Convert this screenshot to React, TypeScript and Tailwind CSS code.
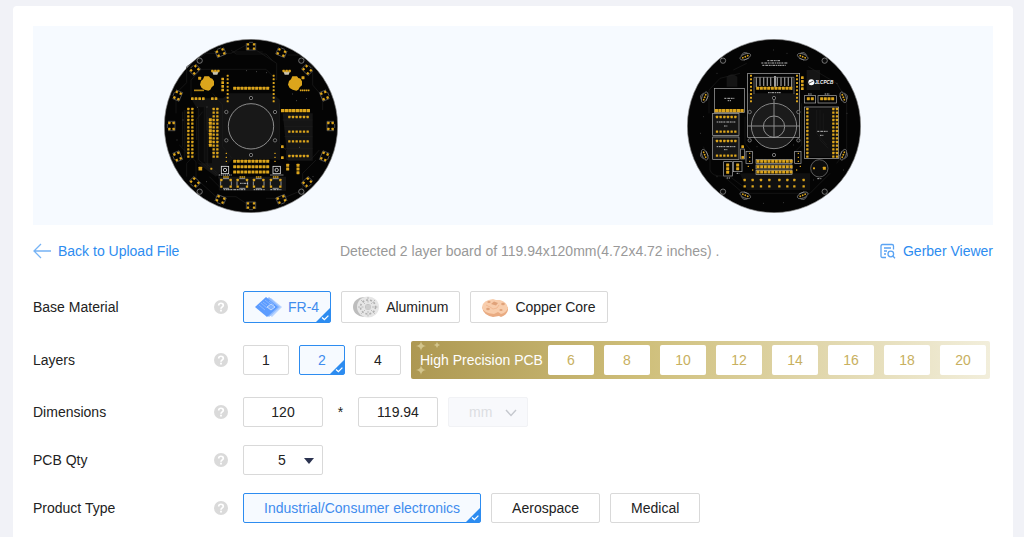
import { useState, type ReactNode } from 'react';

const GOLD = '#dca51c';
const SILK = '#b0b0b0';

type PadsProps = { x: number; y: number; nx?: number; ny?: number; dx?: number; dy?: number; s?: number };

/** A grid of square pads; x and y are the centre of the first one. */
function Pads({ x, y, nx = 1, ny = 1, dx = 11, dy = 11, s = 7 }: PadsProps) {
  const cells: ReactNode[] = [];
  for (let j = 0; j < ny; j++) {
    for (let i = 0; i < nx; i++) {
      cells.push(<rect key={`${i}-${j}`} x={x + i * dx - s / 2} y={y + j * dy - s / 2} width={s} height={s} rx={1} />);
    }
  }
  return <g fill={GOLD}>{cells}</g>;
}

function Hole({ x, y, r }: { x: number; y: number; r: number }) {
  return <circle cx={x} cy={y} r={r} fill="#0b0b0b" stroke="#858585" strokeWidth={2.5} />;
}

function Box({ x, y, w, h }: { x: number; y: number; w: number; h: number }) {
  return <rect x={x} y={y} width={w} height={h} fill="none" stroke={SILK} strokeWidth={2} />;
}

function Marks({ d }: { d: string }) {
  return <path d={d} fill="none" stroke="#d8d8d8" strokeWidth={2.5} strokeDasharray="5 2 3 1 7 2" />;
}

const RING_16 = Array.from({ length: 16 }, (_, i) => i * 22.5);
const RING_8 = Array.from({ length: 8 }, (_, i) => i * 45 + 22.5);
const KEYS = [210, 259, 308, 359];

function Traces() {
  return (
    <g fill="none" stroke="#1d1d1d" strokeWidth={2}>
      <path d="M60 250 V190 L92 158 V110 L150 70 H225 L270 45 M105 200 V150 L135 118 H330 L362 150 V100 L300 60" />
      <path d="M70 345 L120 395 V445 L180 500 H240 L285 530 M128 235 V390 L190 440 V480 H380" />
      <path d="M500 240 V200 L470 165 V110 L430 75 H395 M480 390 L440 430 V480 L380 505 H330" />
      <path d="M150 230 V400 L185 430 M145 230 V395 M140 245 L122 268 V330 M155 260 V410" />
      <path d="M370 220 V340 L392 362 V388 H465 L490 360 M380 270 H470 M385 290 H470 M385 320 H470 M375 355 H470" />
      <path d="M120 370 L92 400 V440 M160 440 L200 480 M90 240 V380 M85 240 V385 M80 245 V350" />
      <path d="M225 60 L240 72 H330 L350 92 M230 66 H320 M170 190 L200 225 V350 M200 350 L228 385" />
    </g>
  );
}

function BoardFront() {
  return (
    <svg viewBox="24 27 522 522" className="size-[174px]" role="img" aria-label="Top side of the board">
      <circle cx={285} cy={288} r={260} fill="#040404" stroke="#8d8d8d" strokeWidth={2} />
      <path d="M105 205 H200 L222 190 H350 L372 210 V390 L340 388 H230 L180 440 L125 400 V240 Z" fill="#131313" />
      <path d="M185 440 H390 V482 H205 Z M380 250 H470 V392 H395 Z" fill="#151515" />
      <path d="M120 232 L150 232 V300 L168 320 V400 H122 Z" fill="#080808" />
      <Traces />
      {RING_16.map((a) => (
        <g key={a} transform={`rotate(${a} 285 288) translate(285 49)`}>
          <path d="M-14 -10 V11 H14 V-10 M-6 -12 H6" fill="none" stroke="#8a8a8a" strokeWidth={1.5} />
          <Pads x={-9} y={-6} nx={2} ny={2} dx={18} dy={13} s={7} />
        </g>
      ))}
      <circle cx={285} cy={289} r={68} fill="#181818" stroke="#a5a5a5" strokeWidth={2.5} />
      {[[131, 92], [436, 92], [131, 485], [436, 485]].map(([x, y]) => <Hole key={`${x}${y}`} x={x} y={y} r={8} />)}
      {[[285, 204], [211, 246], [357, 246], [211, 331], [357, 331], [285, 375]].map(([x, y]) => (
        <Hole key={`${x}${y}`} x={x} y={y} r={5} />
      ))}
      {[153, 417].map((x) => (
        <path key={x} transform={`translate(${x} 160)`} fill={GOLD}
          d="M-8 -21 H6 L10 -16 L16 -14 L21 -6 V6 L14 12 L10 19 L4 22 L-7 19 L-16 14 L-21 4 L-18 -7 L-12 -12 Z" />
      ))}
      {[178, 392].map((x) => (
        <g key={x}>
          <path d={`M${x - 10} 124 H${x + 10} L${x + 6} 134 H${x - 6} Z`} fill="#c9c3b1" />
          <Pads x={x - 9} y={123} nx={3} dx={9} s={7} />
        </g>
      ))}
      <Pads x={131} y={145} s={9} /><Pads x={441} y={143} s={9} /><Pads x={430} y={150} s={7} />
      <Pads x={215} y={137} ny={8} s={6} />
      <Pads x={353} y={137} ny={8} s={6} />
      <Pads x={200} y={147} ny={4} s={8} />
      <Pads x={236} y={175} nx={10} s={9} />
      <Pads x={117} y={181} nx={5} dx={6} s={5} />
      <Pads x={434} y={181} nx={5} dx={6} s={5} />
      <Pads x={109} y={206} nx={4} s={8} />
      <Pads x={169} y={206} nx={2} s={8} />
      <Pads x={97} y={237} nx={2} dx={12} ny={14} s={7} />
      <Pads x={173} y={237} nx={2} ny={14} s={7} />
      <Pads x={163} y={269} ny={8} s={9} />
      <Pads x={380} y={242} nx={8} s={10} />
      {[261, 305, 334, 378].map((y) => <Pads key={y} x={400} y={y} nx={6} s={7} />)}
      <Pads x={379} y={350} ny={2} dy={33} s={8} />
      <Pads x={395} y={406} ny={2} s={9} />
      <Pads x={426} y={406} ny={3} s={9} />
      <Pads x={236} y={394} nx={10} ny={3} dy={16} s={9} />
      <Pads x={133} y={416} s={11} /><Pads x={166} y={416} s={6} />
      <Pads x={211} y={370} ny={3} dy={12} s={4} /><Pads x={357} y={370} ny={3} dy={12} s={4} />
      {[207, 362].map((x) => (
        <g key={x} fill="none" stroke="#dedede" strokeWidth={2.5}>
          <rect x={x - 11} y={409} width={22} height={22} />
          <circle cx={x} cy={420} r={5} />
          <path d={`M${x - 19} 435 H${x + 20}`} strokeDasharray="4 2" />
        </g>
      ))}
      {KEYS.map((x) => (
        <g key={x}>
          <path d={`M${x - 9} 446 H${x + 9} M${x - 9} 475 H${x + 9} M${x - 16} 454 V467 M${x + 16} 454 V467`} stroke={SILK} strokeWidth={2.5} />
          <Pads x={x - 14} y={450} nx={2} ny={2} dx={28} dy={20} s={7} />
          <Pads x={x - 6} y={441} nx={3} dx={6} s={5} />
        </g>
      ))}
      <Marks d="M203 479 H270 M293 479 H326 M343 479 H376 M252 460 H276" />
      <path d="M140 210 h2 M123 232 h2 M152 231 h2 M270 122 h2 M300 125 h2 M330 128 h2 M420 212 h2 M450 206 h2 M80 270 h2 M62 330 h2 M430 352 h2 M470 440 h2 M150 455 h2 M408 192 h2" stroke="#999" strokeWidth={2} />
    </svg>
  );
}

function BoardBack() {
  return (
    <svg viewBox="21 27 522 522" className="size-[174px]" role="img" aria-label="Bottom side of the board">
      <circle cx={282} cy={288} r={260} fill="#040404" stroke="#8d8d8d" strokeWidth={2} />
      <path d="M380 120 H420 V180 H380 Z M140 140 Q155 125 172 140 V170 H140 Z M98 250 H177 V388 H98 Z M205 190 H358 V322 H205 Z" fill="#151515" />
      <path d="M180 430 H390 V480 H200 Z M380 235 H470 V380 H380 Z" fill="#101010" />
      <g fill="none" stroke="#1d1d1d" strokeWidth={2}>
        <path d="M87 250 V180 L120 145 L180 130 M90 420 V390 L70 350 M90 420 Q95 440 130 438 L190 490 H390 L450 430" />
        <path d="M385 110 L470 160 L500 210 V360 L470 400 M200 100 L160 120 M420 240 V330 L445 355 M410 240 V310 L440 345 M430 250 V300" />
        <path d="M365 220 V345 L340 370 M195 260 V340 L220 370 M150 440 L190 470" />
      </g>
      {RING_8.map((a) => (
        <g key={a} transform={`rotate(${a} 282 288) translate(282 63)`}>
          <ellipse rx={17} ry={8} fill="none" stroke="#8f8f8f" strokeWidth={2} />
          <path d="M-10 -8 L0 -13 L10 -8 M-8 8 H8" fill="none" stroke="#8f8f8f" strokeWidth={2} />
          <Pads x={-8} y={0} nx={3} dx={8} s={5} />
        </g>
      ))}
      {[[129, 92], [434, 92], [129, 485], [434, 485]].map(([x, y]) => <Hole key={`${x}${y}`} x={x} y={y} r={8} />)}
      <Marks d="M262 92 H300 M244 99 H322 M247 106 H318 M264 188 H302 M133 205 H164 M143 212 H153 M110 276 H166 M132 288 H142 M110 350 H166 M132 359 H142 M412 304 H444 M420 316 H430" />
      <circle cx={282} cy={288} r={68} fill="#1b1b1b" stroke="#9a9a9a" strokeWidth={2.5} />
      <circle cx={282} cy={290} r={32} fill="none" stroke="#a5a5a5" strokeWidth={2.5} />
      <path d="M203 288 H359 M282 200 V322" stroke="#8a8a8a" strokeWidth={3} />
      <Box x={203} y={130} w={156} h={192} />
      <path d="M229 142 V172 M240 142 V168 M251 142 V168 M262 142 V168 M272 142 V168 M292 142 V168 M303 142 V168 M314 142 V168 M325 142 V168 M335 142 V180" stroke="#8a8a8a" strokeWidth={4} />
      <path d="M285 138 V170" stroke="#eee" strokeWidth={4} />
      <path d="M222 142 H342 M222 142 V192 M342 142 V192" stroke="#8e8e8e" strokeWidth={2} />
      <Pads x={213} y={137} ny={8} s={6} /><Pads x={351} y={137} ny={8} s={6} />
      <Pads x={367} y={143} ny={4} s={8} /><Pads x={233} y={175} nx={10} s={9} />
      {[[282, 204], [209, 246], [355, 246], [209, 331], [355, 331], [282, 375]].map(([x, y]) => (
        <Hole key={`${x}${y}`} x={x} y={y} r={5} />
      ))}
      <circle cx={394} cy={157} r={9} fill="#fff" />
      <path d="M386 160 L400 153" stroke="#111" strokeWidth={2} />
      <text x={404} y={162} fontSize={14} fontWeight={700} fontStyle="italic" fill="#fff" className="font-['Liberation_Sans',sans-serif]">JLCPCB</text>
      <Box x={103} y={175} w={90} h={72} /><Pads x={109} y={242} nx={8} s={10} />
      <Box x={98} y={250} w={79} h={66} /><Pads x={111} y={261} nx={6} ny={2} dy={44} s={7} />
      <Box x={98} y={321} w={79} h={67} /><Pads x={111} y={333} nx={6} ny={2} dy={44} s={7} />
      <Box x={182} y={357} w={11} h={30} /><Pads x={188} y={350} ny={2} dy={32} s={8} />
      <Box x={198} y={364} w={19} h={36} /><Box x={344} y={364} w={19} h={36} />
      <Pads x={209} y={370} ny={3} dy={12} s={4} /><Pads x={355} y={370} ny={3} dy={12} s={4} />
      {[394, 411, 427].map((y) => <Box key={y} x={228} y={y - 6} w={108} h={12} />)}
      <Pads x={234} y={394} nx={10} ny={3} dy={16} s={9} />
      {[194, 218, 243, 268, 298, 322, 343, 371].map((x) => <Pads key={x} x={x} y={450} ny={2} dy={19} s={7} />)}
      <Pads x={205} y={409} s={4} /><Pads x={218} y={420} s={4} /><Pads x={361} y={409} s={4} /><Pads x={350} y={420} s={4} />
      <Box x={131} y={395} w={26} h={43} /><Pads x={143} y={405} ny={3} s={9} />
      <Box x={160} y={395} w={26} h={30} /><Pads x={173} y={405} ny={2} s={9} />
      <Marks d="M140 444 H150 M170 430 H178 M384 192 H396 M434 192 H448 M412 446 H424" />
      <Box x={373} y={197} w={34} h={22} /><Pads x={385} y={206} nx={2} dx={12} s={9} />
      <Box x={414} y={197} w={55} h={22} /><Pads x={425} y={206} nx={4} s={9} />
      <Box x={373} y={231} w={103} h={154} />
      <Pads x={382} y={237} ny={14} s={7} /><Pads x={460} y={237} nx={2} ny={14} s={7} />
      <circle cx={418} cy={415} r={26} fill="#0c0c0c" stroke="#858585" strokeWidth={2} />
      <Pads x={402} y={415} s={6} /><Pads x={433} y={415} s={9} />
      <path d="M280 60 h2 M320 70 h2 M110 130 h2 M250 520 h2 M310 518 h2 M470 160 h2 M70 260 h2 M60 310 h2 M500 250 h2 M400 450 h2 M110 440 h2 M490 420 h2 M230 350 h2 M340 345 h2" stroke="#777" strokeWidth={2} />
    </svg>
  );
}

function Fr4Icon() {
  return (
    <svg viewBox="0 0 28 24" className="h-6 w-7" aria-hidden="true">
      <path d="M6 13 L17 3 L28 12 L18 22 Z" fill="#b7d4ff" />
      <path d="M4 13 L15 2 L26 12 L15 22 Z" fill="#8fbaff" />
      <path d="M1 12 L12 2 L24 12 L13 22 Z" fill="#5c9cff" />
      <path d="M5 10 L11 15 M7 8 L13 13 M9 7 L13 10 M11 5 L16 9 M15 6 L20 10" stroke="#94bdff" strokeWidth={0.8} fill="none" />
      <path d="M13 12 L17 9 L21 12 L17 15 Z" fill="#7fb1ff" stroke="#d7e7ff" strokeWidth={0.8} />
    </svg>
  );
}

function AluminumIcon() {
  return (
    <svg viewBox="0 0 28 24" className="h-6 w-7" aria-hidden="true">
      <ellipse cx={12} cy={12} rx={11} ry={10} fill="#bdbdbd" />
      <ellipse cx={16} cy={12} rx={11} ry={10.5} fill="#e6e6e6" />
      <g fill="none" stroke="#b0b0b0">
        <ellipse cx={16} cy={12} rx={7.5} ry={7} strokeWidth={1.6} strokeDasharray="2 2" />
        <path d="M16 2 V22 M6 12 H26 M9 5 L23 19 M23 5 L9 19" strokeWidth={0.8} strokeDasharray="2 1.5" />
      </g>
      <rect x={13.5} y={9.5} width={5} height={5} rx={1} fill="#b8b8b8" />
      <path d="M14 11 H18 M14 13 H18" stroke="#eee" strokeWidth={0.8} />
    </svg>
  );
}

function CopperIcon() {
  return (
    <svg viewBox="0 0 28 24" className="h-6 w-7" aria-hidden="true">
      <path d="M1 12 Q2 20 12 22 L18 21 L20 22 Q26 20 27 15 V12 Z" fill="#e9ab82" />
      <path d="M1 12 Q2 5 12 4 L15 5 L19 5 Q26 7 27 13 Q25 18 20 19 L17 17 L13 19 Q2 18 1 12 Z" fill="#f8cdac" />
      <g fill="#e0a27a">
        <ellipse cx={8} cy={7} rx={1.7} ry={1.1} />
        <ellipse cx={22} cy={9} rx={1.8} ry={1.2} />
        <ellipse cx={7} cy={14} rx={1.8} ry={1.2} />
        <ellipse cx={20} cy={15} rx={1.6} ry={1.1} />
        <path d="M10 9 L13 6.5 L17 8 L15 10.5 Z" />
      </g>
      <path d="M5 10 L9 12 L12 14 L16 13 L18 10" stroke="#efb48c" strokeWidth={0.8} fill="none" />
    </svg>
  );
}

function Help({ topic }: { topic: string }) {
  return (
    <button type="button" aria-label={`About ${topic}`} className="mr-[15px] size-3.5 shrink-0">
      <svg viewBox="0 0 14 14" className="size-3.5" aria-hidden="true">
        <circle cx={7} cy={7} r={7} fill="#dadada" />
        <path d="M4.7 5.5 C4.7 2.5 9.3 2.5 9.3 5.4 C9.3 6.9 7 7 7 8.8" fill="none" stroke="#fff" strokeWidth={1.7} />
        <rect x={6.1} y={9.7} width={1.8} height={1.8} fill="#fff" />
      </svg>
    </button>
  );
}

function Row({ label, htmlFor, children }: { label: string; htmlFor?: string; children: ReactNode }) {
  return (
    <div className="flex items-center">
      <div className="flex w-[210px] shrink-0 items-center justify-between">
        {htmlFor ? <label htmlFor={htmlFor}>{label}</label> : <span>{label}</span>}
        <Help topic={label} />
      </div>
      <div className="flex min-w-0 flex-1 items-center gap-2.5" role="group" aria-label={label}>{children}</div>
    </div>
  );
}

function Option({ selected, onSelect, size, children }: { selected: boolean; onSelect: () => void; size: string; children: ReactNode }) {
  return (
    <button
      type="button"
      aria-pressed={selected}
      onClick={onSelect}
      className={`relative flex shrink-0 items-center justify-center gap-1.5 rounded-xs border ${size} ${
        selected ? 'border-[#2d8cf0] bg-[#f6faff] text-[#3f8cee]' : 'border-[#d9d9d9] bg-white text-[#222]'
      }`}
    >
      {children}
      {selected && (
        <svg viewBox="0 0 14 14" className="absolute right-0 bottom-0 size-3.5" aria-hidden="true">
          <path d="M14 0 V14 H0 Z" fill="#2d8cf0" />
          <path d="M6 9.5 L8.4 11.6 L12.4 7.6" fill="none" stroke="#fff" strokeWidth={1.3} />
        </svg>
      )}
    </button>
  );
}

const MATERIALS = [
  { name: 'FR-4', icon: <Fr4Icon /> },
  { name: 'Aluminum', icon: <AluminumIcon /> },
  { name: 'Copper Core', icon: <CopperIcon /> },
];
const PRODUCTS = ['Industrial/Consumer electronics', 'Aerospace', 'Medical'];
const FIELD = 'h-[30px] w-20 rounded-xs border border-[#d9d9d9] bg-white text-center text-[#222] outline-none';

export default function App() {
  const [material, setMaterial] = useState('FR-4');
  const [layers, setLayers] = useState(2);
  const [product, setProduct] = useState(PRODUCTS[0]);
  const [width, setWidth] = useState('120');
  const [height, setHeight] = useState('119.94');
  const [qty, setQty] = useState('5');

  return (
    <div className="min-h-screen bg-[#f1f2f7] pt-1.5 pr-[11px] pl-[13px] font-['Liberation_Sans',Arial,sans-serif] text-sm text-[#222]">
      <main className="min-h-[531px] rounded-t-sm bg-white p-5 pb-3.5">
        <section className="flex h-[199px] items-start justify-between bg-[#f6faff] pt-[13px] pr-[132px] pl-[131px]">
          <BoardFront />
          <BoardBack />
        </section>

        <div className="mt-4 flex items-center justify-between leading-5">
          <a href="#upload" className="flex items-center gap-[7px] text-[#2d8cf0]">
            <svg viewBox="0 0 18 16" className="h-4 w-[18px]" fill="none" stroke="#76b3f5" strokeWidth={1.3} aria-hidden="true">
              <path d="M8 1 L1 8 L8 15 M1 8 H18" />
            </svg>
            Back to Upload File
          </a>
          <p className="text-[#999]">Detected 2 layer board of 119.94x120mm(4.72x4.72 inches) .</p>
          <a href="#viewer" className="flex items-center gap-[7px] text-[#2d8cf0]">
            <svg viewBox="0 0 16 16" className="size-4" fill="none" stroke="#5aa3f3" strokeWidth={1.3} aria-hidden="true">
              <path d="M6 14.5 H2.5 Q1 14.5 1 13 V3 Q1 1.5 2.5 1.5 H12 Q13.5 1.5 13.5 3 V6.5 M4 5 H11 M4 8 H7 M4 11 H6" />
              <circle cx={10.8} cy={11} r={2.8} />
              <path d="M12.8 13 L15 15.2" />
            </svg>
            Gerber Viewer
          </a>
        </div>

        <form className="mt-[30px] flex flex-col gap-[18px]" onSubmit={(e) => e.preventDefault()}>
          <Row label="Base Material">
            {MATERIALS.map((m) => (
              <Option key={m.name} selected={material === m.name} onSelect={() => setMaterial(m.name)} size="h-8 pl-2.5 pr-[11px]">
                {m.icon}
                {m.name}
              </Option>
            ))}
          </Row>

          <Row label="Layers">
            {[1, 2, 4].map((n) => (
              <Option key={n} selected={layers === n} onSelect={() => setLayers(n)} size="h-[30px] w-[46px]">
                {n}
              </Option>
            ))}
            <div className="relative flex h-[38px] items-center gap-2.5 rounded-xs bg-linear-to-r from-[#ad9852] via-[#cfbf7a] via-40% to-[#f2eedb] pr-1 pl-[9px]">
              <svg viewBox="0 0 32 38" className="absolute top-0 left-0 h-[38px] w-8" fill="#d3c58c" aria-hidden="true">
                <path d="M10 0 Q10.5 4.5 15 5 Q10.5 5.5 10 10 Q9.5 5.5 5 5 Q9.5 4.5 10 0 Z" />
                <path d="M26 1 Q26.5 3.5 29 4 Q26.5 4.5 26 7 Q25.5 4.5 23 4 Q25.5 3.5 26 1 Z" />
                <path d="M10 24 Q10.5 28.5 15 29 Q10.5 29.5 10 34 Q9.5 29.5 5 29 Q9.5 28.5 10 24 Z" />
              </svg>
              <span className="relative w-[118px] whitespace-nowrap text-white">High Precision PCB</span>
              {[6, 8, 10, 12, 14, 16, 18, 20].map((n) => (
                <button
                  key={n}
                  type="button"
                  aria-pressed={layers === n}
                  onClick={() => setLayers(n)}
                  className="h-[30px] w-[46px] shrink-0 rounded-xs bg-white text-[#c8b060]"
                >
                  {n}
                </button>
              ))}
            </div>
          </Row>

          <Row label="Dimensions" htmlFor="board-width">
            <input id="board-width" value={width} onChange={(e) => setWidth(e.target.value)} className={FIELD} />
            <span className="w-[15px] text-center">*</span>
            <input aria-label="Height" value={height} onChange={(e) => setHeight(e.target.value)} className={FIELD} />
            <div className="relative">
              <select
                aria-label="Unit"
                disabled
                className="block h-[30px] w-20 appearance-none rounded-xs border border-[#f1f2f5] bg-[#f8f9fc] pl-5 text-[#dcdee2] opacity-100"
              >
                <option>mm</option>
              </select>
              <svg viewBox="0 0 12 8" className="pointer-events-none absolute top-3 right-[11px] h-2 w-3" fill="none" stroke="#c5c8ce" strokeWidth={1.4} aria-hidden="true">
                <path d="M1 1 L6 6.5 L11 1" />
              </svg>
            </div>
          </Row>

          <Row label="PCB Qty" htmlFor="pcb-qty">
            <div className="relative">
              <select
                id="pcb-qty"
                value={qty}
                onChange={(e) => setQty(e.target.value)}
                className="block h-[30px] w-20 appearance-none rounded-xs border border-[#d9d9d9] bg-white pl-[34px] text-[#222]"
              >
                {['5', '10', '15', '20', '25', '30'].map((q) => (
                  <option key={q}>{q}</option>
                ))}
              </select>
              <svg viewBox="0 0 10 6" className="pointer-events-none absolute top-[13px] right-[9px] h-1.5 w-2.5" aria-hidden="true">
                <path d="M0 0 H10 L5 6 Z" fill="#2b3350" />
              </svg>
            </div>
          </Row>

          <Row label="Product Type">
            {PRODUCTS.map((p) => (
              <Option key={p} selected={product === p} onSelect={() => setProduct(p)} size="h-[30px] px-5">
                {p}
              </Option>
            ))}
          </Row>
        </form>
      </main>
    </div>
  );
}
